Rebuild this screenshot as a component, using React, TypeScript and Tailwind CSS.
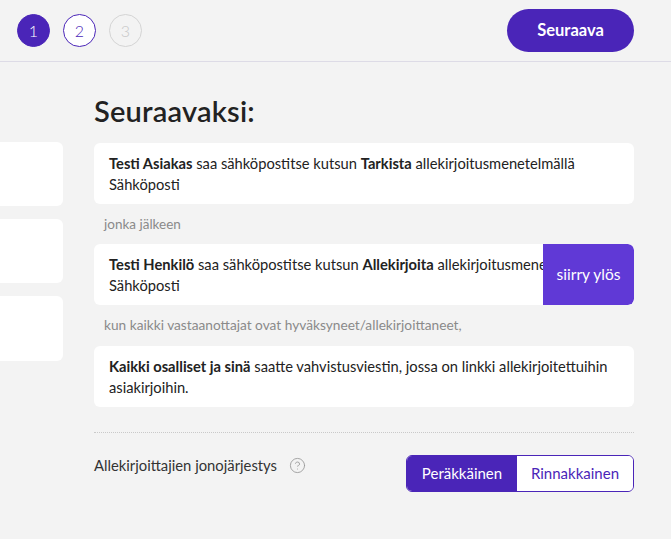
import { HelpCircle } from 'lucide-react';

const font = { fontFamily: 'Lato, "Noto Sans", sans-serif' };

const StepCircle = ({ n, state }: { n: number; state: 'active' | 'next' | 'off' }) => {
  const cls =
    state === 'active'
      ? 'bg-[#4a25b8] text-white border-[#4a25b8]'
      : state === 'next'
      ? 'bg-white text-[#4a25b8] border-[#4a25b8]'
      : 'bg-transparent text-[#c8c8c8] border-[#d4d4d4]';
  return (
    <div className={`w-[33px] h-[33px] rounded-full border flex items-center justify-center text-[16px] font-light ${cls}`}>
      {n}
    </div>
  );
};

const App = () => {
  return (
    <div className="w-[671px] h-[539px] bg-[#f3f3f3] overflow-hidden text-[#222]" style={font}>
      <header className="h-[62px] border-b border-[#dddbe6] flex items-center justify-between pl-[17px] pr-[37px]">
        <div className="flex items-center gap-[13px]">
          <StepCircle n={1} state="active" />
          <StepCircle n={2} state="next" />
          <StepCircle n={3} state="off" />
        </div>
        <button className="w-[127px] h-[43px] rounded-full bg-[#4a25b8] text-white font-bold text-[16.5px]">
          Seuraava
        </button>
      </header>

      <div className="flex gap-[31px] pr-[37px]">
        <div className="w-[63px] pt-[80px] flex flex-col gap-[13px] shrink-0">
          <div className="h-[64px] bg-white rounded-r-md" />
          <div className="h-[64px] bg-white rounded-r-md" />
          <div className="h-[65px] bg-white rounded-r-md" />
        </div>

        <div className="flex-1 min-w-0">
          <h1 className="text-[29px] font-semibold leading-none pt-[34px] pb-[18px] tracking-[0.2px]">Seuraavaksi:</h1>

          <div className="bg-white rounded-md h-[61px] px-[15px] py-[10px] text-[14.7px] leading-[21px]">
            <b>Testi Asiakas</b> saa sähköpostitse kutsun <b>Tarkista</b> allekirjoitusmenetelmällä
            <br />
            Sähköposti
          </div>
          <div className="h-[40px] flex items-center pl-[10px] text-[13.5px] text-[#8a8a8a]">jonka jälkeen</div>

          <div className="flex bg-white rounded-md h-[61px] overflow-hidden">
            <div className="flex-1 min-w-0 overflow-hidden pl-[15px] py-[10px] text-[14.7px] leading-[21px] whitespace-nowrap">
              <b>Testi Henkilö</b> saa sähköpostitse kutsun <b>Allekirjoita</b> allekirjoitusmenetelmällä
              <br />
              Sähköposti
            </div>
            <button className="shrink-0 h-full w-[91px] bg-[#6039d6] text-white text-[15.5px] rounded-r-md">
              siirry ylös
            </button>
          </div>
          <div className="h-[41px] flex items-center pl-[10px] text-[13.7px] text-[#8a8a8a]">
            kun kaikki vastaanottajat ovat hyväksyneet/allekirjoittaneet,
          </div>

          <div className="bg-white rounded-md h-[61px] px-[15px] py-[10px] text-[14.7px] leading-[21px]">
            <b>Kaikki osalliset ja sinä</b> saatte vahvistusviestin, jossa on linkki allekirjoitettuihin
            <br />
            asiakirjoihin.
          </div>

          <div className="mt-[25px] border-t border-dotted border-[#c9c9c9]" />

          <div className="mt-[22px] flex items-start justify-between">
            <div className="flex items-center gap-[12px] text-[14.8px] leading-[21px] text-[#333]">
              <span>Allekirjoittajien jonojärjestys</span>
              <HelpCircle size={17} strokeWidth={1.25} className="text-[#9a9a9a]" />
            </div>
            <div className="flex h-[37px] rounded-md border border-[#4a25b8] overflow-hidden text-[15px]">
              <button className="w-[110px] bg-[#4a25b8] text-white">Peräkkäinen</button>
              <button className="w-[116px] bg-white text-[#4a25b8]">Rinnakkainen</button>
            </div>
          </div>
        </div>
      </div>
    </div>
  );
};

export default App;
